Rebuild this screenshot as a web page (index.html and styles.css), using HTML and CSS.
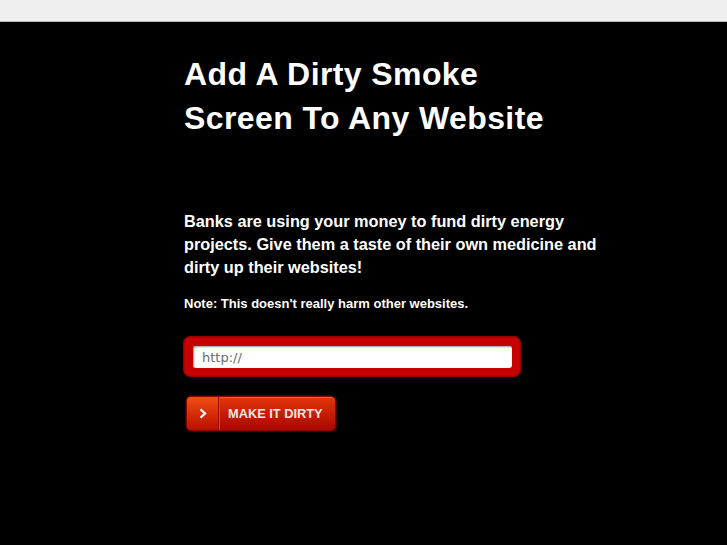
FILE: index.html
```html
<!DOCTYPE html>
<html>
<head>
<meta charset="utf-8">
<title>Dirty Smoke Screen</title>
<link rel="stylesheet" href="styles.css">
</head>
<body>
<div class="topbar"></div>
<main class="content">
  <h1 class="headline">Add A Dirty Smoke<br>Screen To Any Website</h1>
  <p class="lead">Banks are using your money to fund dirty energy projects. Give them a taste of their own medicine and dirty up their websites!</p>
  <p class="note">Note: This doesn't really harm other websites.</p>
  <form class="form" onsubmit="return false">
    <div class="field-frame">
      <input class="field" type="text" value="http://">
    </div>
    <button class="btn" type="submit">
      <span class="btn-icon"><svg width="8" height="11" viewBox="0 0 8 11"><path d="M1.5 1.2 L6 5.5 L1.5 9.8" fill="none" stroke="#fff" stroke-width="2.2" stroke-linejoin="miter"/></svg></span>
      <span class="btn-label">MAKE IT DIRTY</span>
    </button>
  </form>
</main>
</body>
</html>
```
FILE: styles.css
```css
html, body {
  margin: 0;
  padding: 0;
  background: #000;
  height: 100%;
}
body {
  font-family: "Liberation Sans", Arial, sans-serif;
  color: #fff;
}
.topbar {
  height: 21px;
  background: #efefef;
  border-bottom: 1px solid #b9b9b9;
}
.content {
  padding: 30px 0 0 184px;
  width: 430px;
}
.headline {
  margin: 0;
  font-size: 32px;
  font-weight: bold;
  line-height: 44px;
  letter-spacing: 0.4px;
}
.lead {
  margin: 70px 0 0;
  font-size: 16.3px;
  font-weight: bold;
  line-height: 23px;
}
.note {
  margin: 17px 0 0;
  font-size: 13px;
  font-weight: bold;
  line-height: 16px;
}
.form {
  margin: 24px 0 0;
}
.field-frame {
  box-sizing: border-box;
  width: 338px;
  height: 41px;
  margin-left: -1px;
  padding: 9px 8px 8px 9px;
  background: #c40000;
  border: 1px solid #980000;
  border-radius: 7px;
  box-shadow: inset 0 0 0 1px #b00000, inset 0 0 0 3px #cc0000;
}
.field {
  box-sizing: border-box;
  display: block;
  width: 100%;
  height: 22px;
  margin: 0;
  padding: 0 0 0 9px;
  border: 0;
  border-radius: 3px;
  background: #fff;
  box-shadow: inset 1px 1px 2px #9a9a9a;
  font-family: "DejaVu Sans", Verdana, sans-serif;
  font-size: 13px;
  color: #6a6a6a;
  outline: none;
}
.btn {
  display: flex;
  align-items: stretch;
  box-sizing: border-box;
  width: 150px;
  height: 35px;
  margin: 19px 0 0 2px;
  padding: 0;
  border: 1px solid #8e0000;
  border-radius: 5px;
  background: linear-gradient(#e2360a, #c41b02 55%, #a80800);
  box-shadow: inset 0 1px 0 #f0642a, 0 0 0 1px #3a0000;
  cursor: pointer;
  overflow: hidden;
}
.btn-icon {
  width: 31px;
  display: flex;
  align-items: center;
  justify-content: center;
  background: linear-gradient(#f04e14, #d42a06 55%, #b81000);
  border-right: 1px solid #a10600;
  box-shadow: 1px 0 0 #e0461a;
}
.btn-label {
  flex: 1;
  display: flex;
  align-items: center;
  padding-left: 9px;
  font-family: "Liberation Sans", Arial, sans-serif;
  font-size: 12.8px;
  font-weight: bold;
  color: #f4e6e2;
  letter-spacing: 0;
}
```
